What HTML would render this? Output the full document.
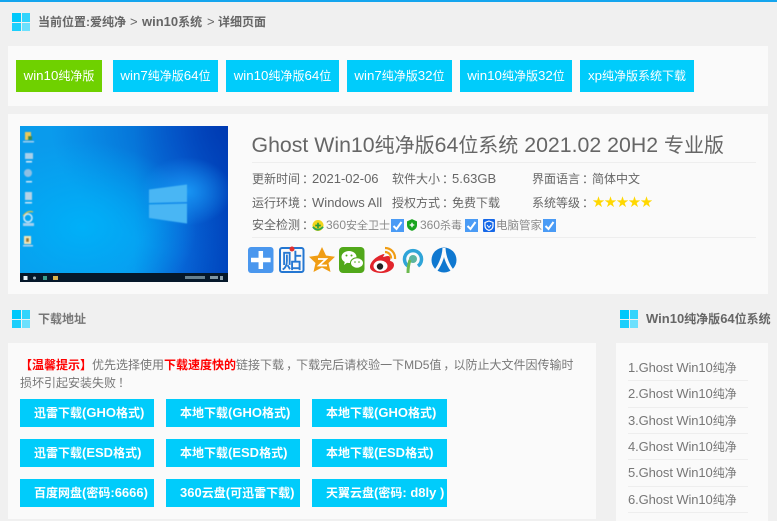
<!DOCTYPE html>
<html lang="zh-CN">
<head>
<meta charset="utf-8">
<title>Ghost Win10纯净版64位系统</title>
<style>
*{margin:0;padding:0;box-sizing:border-box}
html,body{width:777px;height:521px;overflow:hidden;background:#f0f0f0}
body{position:relative;font-family:"Liberation Sans","Noto Sans CJK SC",sans-serif;color:#666}
em{font-style:normal;font-size:13px}
.z{font-family:"Noto Sans CJK TC",sans-serif;position:relative;left:2px}
.a{position:absolute;white-space:nowrap}
.p{position:absolute;background:#fafafa}
.b{position:absolute;background:#00ccfb;color:#fff;font-size:12px;height:32px;line-height:32px;text-align:center;white-space:nowrap}
.b em{font-size:13.3px}
.d{position:absolute;background:#00ccfb;color:#fff;font-size:12px;font-weight:bold;height:28px;line-height:28px;padding-left:14px;white-space:nowrap}
.i{font-size:12px;color:#666;height:18px;line-height:18px}
.s{font-size:11px;line-height:18px;color:#8a8a8a}
.s em{font-size:12px}
.hr{position:absolute;height:1px;background:#eeeeee}
.li{position:absolute;left:628px;width:120px;font-size:12px;color:#777;height:18px;line-height:18px;white-space:nowrap;overflow:hidden;letter-spacing:-.1px}
.win{position:absolute;width:18px;height:18px}
.win i{position:absolute;width:8.500px;height:8.500px}
.chk{position:absolute;width:13px;height:13px}
</style>
</head>
<body>
<div class="a" style="left:0;top:0;width:777px;height:2px;background:#14a5ee"></div>

<div class="win" style="left:12px;top:13px"><i style="left:0;top:0;background:#00c8fb"></i><i style="left:9.500px;top:0;background:#33d4fc"></i><i style="left:0;top:9.500px;background:#1ccffc"></i><i style="left:9.500px;top:9.500px;background:#6ce0fd"></i></div>
<div class="a" style="left:38px;top:13px;font-size:12px;font-weight:bold;line-height:18px">当前位置:爱纯净</div>
<div class="a" style="left:130px;top:13px;font-size:13px;line-height:18px">&gt;</div>
<div class="a" style="left:142px;top:13px;font-size:12px;font-weight:bold;line-height:18px"><em>win10</em>系统</div>
<div class="a" style="left:207px;top:13px;font-size:13px;line-height:18px">&gt;</div>
<div class="a" style="left:218px;top:13px;font-size:12px;font-weight:bold;line-height:18px">详细页面</div>

<div class="p" style="left:8px;top:46px;width:760px;height:60px"></div>
<div class="b" style="left:16px;top:60px;width:86px;background:#6fd100"><em>win10</em>纯净版</div>
<div class="b" style="left:113px;top:60px;width:105px"><em>win7</em>纯净版<em>64</em>位</div>
<div class="b" style="left:226px;top:60px;width:113px"><em>win10</em>纯净版<em>64</em>位</div>
<div class="b" style="left:347px;top:60px;width:105px"><em>win7</em>纯净版<em>32</em>位</div>
<div class="b" style="left:460px;top:60px;width:112px"><em>win10</em>纯净版<em>32</em>位</div>
<div class="b" style="left:580px;top:60px;width:114px"><em>xp</em>纯净版系统下载</div>

<div class="p" style="left:8px;top:114px;width:760px;height:180px"></div>
<svg class="a" style="left:20px;top:126px" width="208" height="156" viewBox="0 0 208 156">
<defs>
<linearGradient id="g" x1="0" y1="0" x2="1" y2="0"><stop offset="0" stop-color="#0a9cec"/><stop offset=".55" stop-color="#0a98ee"/><stop offset=".78" stop-color="#0a72e0"/><stop offset="1" stop-color="#0044bc"/></linearGradient>
<radialGradient id="t" cx="1" cy="0" r=".85"><stop offset="0" stop-color="#0038b0" stop-opacity=".85"/><stop offset="1" stop-color="#0048c0" stop-opacity="0"/></radialGradient>
<radialGradient id="t2" cx="1" cy="1" r=".5"><stop offset="0" stop-color="#0048c0" stop-opacity=".55"/><stop offset="1" stop-color="#0048c0" stop-opacity="0"/></radialGradient>
<radialGradient id="r" cx=".3" cy=".65" r=".55"><stop offset="0" stop-color="#00b0f8"/><stop offset="1" stop-color="#00aef5" stop-opacity="0"/></radialGradient>
<radialGradient id="r3" cx=".8" cy=".42" r=".22"><stop offset="0" stop-color="#1a9cf8" stop-opacity=".9"/><stop offset="1" stop-color="#1a9cf8" stop-opacity="0"/></radialGradient>
<filter id="bl" x="-5%" y="-5%" width="110%" height="110%"><feGaussianBlur stdDeviation=".5"/></filter>
</defs>
<rect width="208" height="156" fill="url(#g)"/>
<rect width="208" height="156" fill="url(#t)"/>
<rect width="208" height="156" fill="url(#t2)"/>
<rect width="208" height="156" fill="url(#r)"/>
<rect width="208" height="156" fill="url(#r3)"/>
<polygon points="129,63.500 167,58.500 167,76 129,77" fill="#48b6f4" filter="url(#bl)"/>
<polygon points="129,78.500 167,77.500 167,97.500 129,92" fill="#48b6f4" filter="url(#bl)"/>
<rect y="147" width="208" height="9" fill="#06182a"/>
<g filter="url(#bl)">
<rect x="5" y="6" width="6" height="8" fill="#e8c85a"/><rect x="8" y="10" width="4" height="4" fill="#3a8a50"/><rect x="3" y="15" width="11" height="1.500" fill="#a5d0ee"/>
<rect x="5" y="27" width="8" height="6" fill="#a8d0ea"/><rect x="6" y="35" width="6" height="1.500" fill="#dcecf7"/>
<circle cx="8" cy="47" r="4" fill="#8fc0e4"/><rect x="6" y="55" width="6" height="1.500" fill="#cfe6f6"/>
<rect x="5" y="66" width="7" height="8" fill="#b5d3e6"/><rect x="5" y="76" width="7" height="1.500" fill="#cfe6f6"/>
<circle cx="8" cy="92" r="4" fill="none" stroke="#cfe9fa" stroke-width="1.500"/><path d="M3 90Q8 84 13 86" stroke="#e7c23c" stroke-width="1.200" fill="none"/><rect x="3" y="97" width="11" height="3" fill="#a5d0ee"/>
<rect x="4" y="110" width="7" height="8" fill="#f2e6b8"/><rect x="6" y="112" width="3" height="4" fill="#9a7a30"/><rect x="3" y="119" width="10" height="1.500" fill="#b6d6ee"/>
</g>
<rect x="3.500" y="150" width="4" height="4" fill="#e8f2f8"/><circle cx="14.500" cy="152" r="1.500" fill="#9fb4c0"/><rect x="23" y="150" width="4" height="4" fill="#3a9d8c"/><rect x="33" y="150" width="5" height="4" fill="#d8b34c"/>
<rect x="165" y="150" width="20" height="3" fill="#66808f"/><rect x="190" y="150" width="8" height="3" fill="#7f96a3"/><rect x="200" y="150" width="3" height="4" fill="#8ca0ad"/>
</svg>

<div class="a" style="left:251.500px;top:130px;font-size:20px;line-height:30px;color:#666"><em style="font-size:21.300px">Ghost Win10</em>纯净版<em style="font-size:21.300px">64</em>位系统<em style="font-size:21.300px"> 2021.02 20H2 </em>专业版</div>
<div class="hr" style="left:252px;top:162px;width:504px"></div>

<div class="a i" style="left:252px;top:170px">更新时间<span class="z">：</span><em>2021-02-06</em></div>
<div class="a i" style="left:392px;top:170px">软件大小<span class="z">：</span><em>5.63GB</em></div>
<div class="a i" style="left:532px;top:170px">界面语言<span class="z">：</span>简体中文</div>
<div class="a i" style="left:252px;top:194px">运行环境<span class="z">：</span><em>Windows All</em></div>
<div class="a i" style="left:392px;top:194px">授权方式<span class="z">：</span>免费下载</div>
<div class="a i" style="left:532px;top:194px">系统等级<span class="z">：</span></div>
<div class="a" style="left:592.500px;top:193px;font-size:12px;line-height:18px;color:#ffd800">★★★★★</div>

<div class="a i" style="left:252px;top:216px">安全检测<span class="z">：</span></div>
<svg class="a" style="left:312px;top:219px" width="12" height="13" viewBox="0 0 13 13"><circle cx="6.500" cy="6.500" r="6" fill="#f1d51c"/><path d="M1 8Q6 14 12 8" stroke="#2fa84f" stroke-width="2" fill="none"/><path d="M6.500 3.500v6M3.500 6.500h6" stroke="#2a9a3c" stroke-width="1.800"/></svg>
<div class="a s" style="left:326px;top:216px"><em>360</em>安全卫士</div>
<svg class="chk" style="left:391px;top:219px" viewBox="0 0 13 13"><rect width="13" height="13" fill="#4a9bf5"/><path d="M2.500 7l3 3 5-7" stroke="#fff" stroke-width="2" fill="none"/></svg>
<svg class="a" style="left:407px;top:219px" width="10" height="12" viewBox="0 0 11 13"><path d="M5.500 0L11 2.500V7q0 4-5.500 6Q0 11 0 7V2.500z" fill="#19a51f"/><path d="M5.500 4v5M3 6.500h5" stroke="#fff" stroke-width="1.500"/></svg>
<div class="a s" style="left:420px;top:216px"><em>360</em>杀毒</div>
<svg class="chk" style="left:465px;top:219px" viewBox="0 0 13 13"><rect width="13" height="13" fill="#4a9bf5"/><path d="M2.500 7l3 3 5-7" stroke="#fff" stroke-width="2" fill="none"/></svg>
<svg class="a" style="left:483px;top:219px" width="12" height="13" viewBox="0 0 12 13"><rect width="12" height="13" rx="1" fill="#1668e8"/><path d="M6 2L10 3.500V7Q10 10 6 11.500 2 10 2 7V3.500z" fill="none" stroke="#fff" stroke-width="1.200"/><path d="M4 6l2 2.500L8 6" stroke="#fff" stroke-width="1" fill="none"/></svg>
<div class="a s" style="left:496px;top:217px;font-size:11.500px">电脑管家</div>
<svg class="chk" style="left:543px;top:219px" viewBox="0 0 13 13"><rect width="13" height="13" fill="#4a9bf5"/><path d="M2.500 7l3 3 5-7" stroke="#fff" stroke-width="2" fill="none"/></svg>
<div class="hr" style="left:252px;top:237px;width:504px"></div>

<svg class="a" style="left:248px;top:246px" width="212" height="28" viewBox="0 0 212 28">
<rect x="0" y="1" width="25.500" height="26" rx="3" fill="#4a97ee"/><path d="M12.800 5v18M3 14h19.600" stroke="#fff" stroke-width="4.500"/>
<rect x="32" y="2" width="23.500" height="24" rx="2" fill="none" stroke="#2477d2" stroke-width="2"/>
<text x="43.800" y="22" text-anchor="middle" font-size="20" fill="#2477d2" stroke="#2477d2" stroke-width=".5" font-family="Noto Sans CJK SC">贴</text><circle cx="44" cy="3" r="2.500" fill="#e03030"/>
<path d="M74 1l4 8.500 9 1.200-6.500 6.300 2 9L74 21.500 65.500 26l2-9L61 10.700l9-1.200z" fill="#f09d14"/><path d="M70 13h8l-7 6.500h8" stroke="#fff" stroke-width="1.800" fill="none"/>
<rect x="91" y="1" width="25.500" height="26" rx="4" fill="#51a81a"/><ellipse cx="101" cy="11" rx="7.500" ry="6" fill="#fff"/><path d="M97 15l-1 4 4-3z" fill="#fff"/><ellipse cx="109" cy="17" rx="6.500" ry="5.200" stroke="#51a81a" stroke-width="1" fill="#fff"/><circle cx="98.500" cy="9.500" r="1" fill="#51a81a"/><circle cx="103.500" cy="9.500" r="1" fill="#51a81a"/><circle cx="107" cy="16" r=".8" fill="#51a81a"/><circle cx="111" cy="16" r=".8" fill="#51a81a"/>
<path d="M136 8C128 10 122 16 122 21c0 4 6 6 11 6 8 0 13-4 13-8 0-3-3-4-4-4 1-3 0-5-2-5-2 0-4 1-5 1 1-2 2-3 1-3z" fill="#e2252c"/><ellipse cx="132.500" cy="20" rx="7" ry="5.500" fill="#fff"/><circle cx="132" cy="20.500" r="3.200" fill="#222"/>
<path d="M137 2a10 10 0 0 1 10 11M137 6a6 6 0 0 1 6 6.500" stroke="#f09d14" stroke-width="2.200" fill="none"/>
<path d="M160 20A8.500 8.500 0 1 1 170 20" fill="none" stroke="#2fa4d8" stroke-width="3.500"/><circle cx="165" cy="13" r="4" fill="#5bb5a0"/><path d="M162 14Q160 20 160 27" stroke="#6cb94e" stroke-width="3" fill="none"/>
<circle cx="196" cy="14" r="12.500" fill="#0f78d0"/><path d="M196 2C195.500 12 191 21 186.500 26M196 2C196.500 12 201 21 205.500 26" stroke="#fafafa" stroke-width="3" fill="none"/>
</svg>

<div class="win" style="left:12px;top:310px"><i style="left:0;top:0;background:#00c8fb"></i><i style="left:9.500px;top:0;background:#33d4fc"></i><i style="left:0;top:9.500px;background:#1ccffc"></i><i style="left:9.500px;top:9.500px;background:#6ce0fd"></i></div>
<div class="a" style="left:38px;top:310px;font-size:12px;font-weight:bold;color:#777;line-height:18px">下载地址</div>
<div class="win" style="left:620px;top:310px"><i style="left:0;top:0;background:#00c8fb"></i><i style="left:9.500px;top:0;background:#33d4fc"></i><i style="left:0;top:9.500px;background:#1ccffc"></i><i style="left:9.500px;top:9.500px;background:#6ce0fd"></i></div>
<div class="a" style="left:646px;top:310px;font-size:12px;font-weight:bold;color:#666;line-height:18px"><em>Win10</em>纯净版<em>64</em>位系统</div>

<div class="p" style="left:8px;top:343px;width:588px;height:176px"></div>
<div class="a" style="left:20px;top:356px;font-size:12px;line-height:18px;color:#777"><b style="color:#f00">【温馨提示】</b>优先选择使用<b style="color:#f00">下载速度快的</b>链接下载<span class="z">，</span>下载完后请校验一下MD5值<span class="z">，</span>以防止大文件因传输时</div>
<div class="a" style="left:20px;top:374px;font-size:12px;line-height:18px;color:#777">损坏引起安装失败<span class="z">！</span></div>

<div class="d" style="left:20px;top:399px;width:134px">迅雷下载<em>(GHO</em>格式<em>)</em></div>
<div class="d" style="left:166px;top:399px;width:134px">本地下载<em>(GHO</em>格式<em>)</em></div>
<div class="d" style="left:312px;top:399px;width:135px">本地下载<em>(GHO</em>格式<em>)</em></div>
<div class="d" style="left:20px;top:439px;width:134px">迅雷下载<em>(ESD</em>格式<em>)</em></div>
<div class="d" style="left:166px;top:439px;width:134px">本地下载<em>(ESD</em>格式<em>)</em></div>
<div class="d" style="left:312px;top:439px;width:135px">本地下载<em>(ESD</em>格式<em>)</em></div>
<div class="d" style="left:20px;top:479px;width:134px">百度网盘<em>(</em>密码<em>:6666)</em></div>
<div class="d" style="left:166px;top:479px;width:134px"><em>360</em>云盘<em>(</em>可迅雷下载<em>)</em></div>
<div class="d" style="left:312px;top:479px;width:135px">天翼云盘<em>(</em>密码<em>: d8ly )</em></div>

<div class="p" style="left:616px;top:343px;width:152px;height:178px"></div>
<div class="li" style="top:359px"><em>1.Ghost Win10</em>纯净</div><div class="hr" style="left:628px;top:380px;width:120px"></div>
<div class="li" style="top:385px"><em>2.Ghost Win10</em>纯净</div><div class="hr" style="left:628px;top:407px;width:120px"></div>
<div class="li" style="top:412px"><em>3.Ghost Win10</em>纯净</div><div class="hr" style="left:628px;top:433px;width:120px"></div>
<div class="li" style="top:438px"><em>4.Ghost Win10</em>纯净</div><div class="hr" style="left:628px;top:459px;width:120px"></div>
<div class="li" style="top:464px"><em>5.Ghost Win10</em>纯净</div><div class="hr" style="left:628px;top:486px;width:120px"></div>
<div class="li" style="top:491px"><em>6.Ghost Win10</em>纯净</div><div class="hr" style="left:628px;top:512px;width:120px"></div>
</body>
</html>
